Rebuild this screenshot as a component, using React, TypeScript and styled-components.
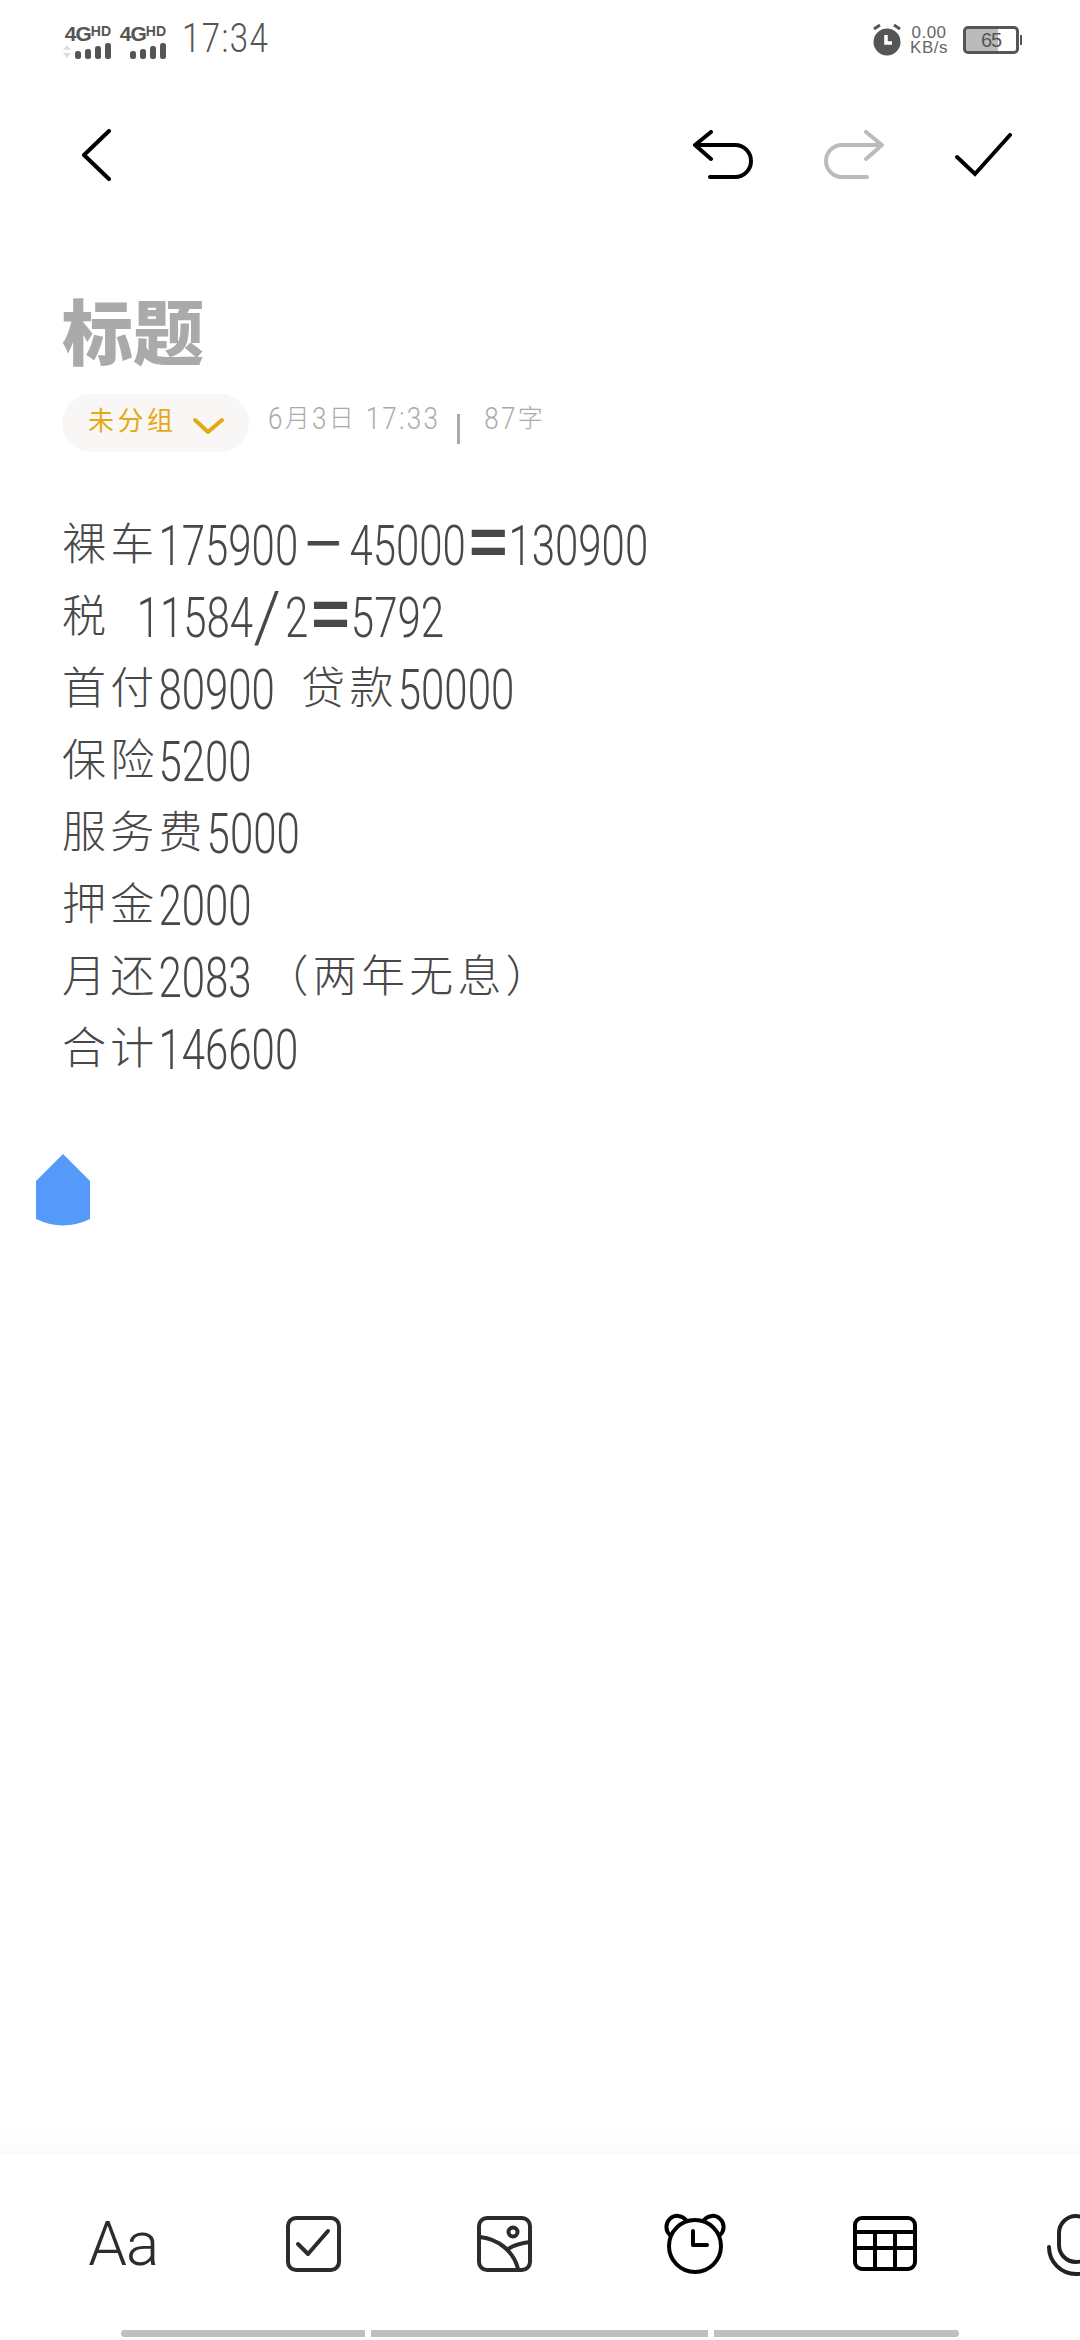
import React from 'react';
import styled, { createGlobalStyle } from 'styled-components';

const GlobalStyle = createGlobalStyle`
  html, body { margin: 0; padding: 0; background: #fff; }
  body { font-family: "Liberation Sans", "Noto Sans CJK SC", sans-serif; }
`;

const Screen = styled.div`
  position: relative;
  width: 1080px;
  height: 2340px;
  overflow: hidden;
  display: flex;
  flex-direction: column;
  background: #fff;
`;

// the note font is tall, narrow and thin, so digits get stretched
const Tall = styled.span<{ $y?: number }>`
  display: inline-block;
  font-family: Roboto, "Liberation Sans", sans-serif;
  font-weight: 300;
  transform: scaleY(${p => p.$y ?? 1.34});
`;

const StatusBar = styled.div`
  height: 80px;
  padding: 0 58px 0 63px;
  box-sizing: border-box;
  display: flex;
  align-items: center;
  color: #555;
`;

const Signal = styled.div`
  width: 48px;
  margin-right: 7px;
  display: flex;
  flex-direction: column;
  align-items: flex-end;
`;

const NetLabel = styled.div`
  font-size: 21px;
  line-height: 19px;
  font-weight: 700;
  white-space: nowrap;
  letter-spacing: -1px;
  small { font-size: 14px; vertical-align: 5px; letter-spacing: 0; }
`;

const Time = styled.div`
  font-size: 33px;
  line-height: 40px;
  letter-spacing: 1.4px;
  margin: -5px 0 0 9px;
  flex: 1;
`;

const Speed = styled.div`
  width: 40px;
  margin: 0 14px 0 7px;
  font-size: 17px;
  line-height: 15px;
  text-align: center;
  letter-spacing: 0.5px;
  color: #666;
`;

const BatteryBody = styled.div<{ $level: number }>`
  width: 56px;
  height: 28px;
  box-sizing: border-box;
  border: 3px solid #555;
  border-radius: 5px;
  background: linear-gradient(
    to right,
    #bbb ${p => p.$level}%,
    #fff ${p => p.$level}%
  );
  background-clip: content-box;
  font-size: 20px;
  line-height: 22px;
  text-align: center;
  letter-spacing: -1px;
`;

const BatteryTip = styled.div`
  width: 2px;
  height: 10px;
  margin-left: 1px;
  background: #555;
`;

const TopBar = styled.div`
  height: 150px;
  padding: 0 68px 0 81px;
  box-sizing: border-box;
  display: flex;
  align-items: center;
`;

const TopActions = styled.div`
  margin-left: auto;
  display: flex;
  align-items: center;
  gap: 71px;
`;

const Content = styled.div`
  flex: 1;
  padding-left: 62px;
`;

const Title = styled.h1`
  margin: 52px 0 0;
  height: 100px;
  font-family: "Noto Sans CJK SC", sans-serif;
  font-size: 71px;
  line-height: 93px;
  font-weight: 900;
  color: #aaa;
`;

const MetaRow = styled.div`
  margin-top: 12px;
  height: 58px;
  display: flex;
  align-items: center;
  color: #aaa;
`;

const GroupPill = styled.div`
  width: 187px;
  height: 58px;
  box-sizing: border-box;
  padding: 0 24px 0 26px;
  border-radius: 29px;
  background: #f8f7f6;
  display: flex;
  align-items: center;
  justify-content: space-between;
  font-family: "Noto Sans CJK SC", sans-serif;
  font-size: 26px;
  letter-spacing: 3.5px;
  color: #e6a817;
`;

const PillLabel = styled.span`
  margin-top: -10px;
`;

const PillChevron = styled.svg`
  margin-top: 6px;
`;

const MetaText = styled.div<{ $gap?: number }>`
  margin-left: ${p => p.$gap ?? 0}px;
  margin-top: -15px;
  font-size: 26px;
  white-space: pre;
  letter-spacing: 2.3px;
`;

const MetaCjk = styled.span`
  font-family: "Noto Sans CJK SC", sans-serif;
  font-size: 25px;
  font-weight: 300;
`;

const Divider = styled.div`
  width: 3px;
  height: 30px;
  background: #aaa;
  margin: 12px 24px 0 17px;
`;

const Body = styled.div`
  margin-top: 58px;
`;

const Line = styled.div`
  height: 72px;
  line-height: 72px;
  color: #484848;
  font-size: 42px;
  white-space: pre;
  word-spacing: 3px;
`;

const Cjk = styled.span`
  font-family: "Noto Sans CJK SC", sans-serif;
  font-size: 44px;
  font-weight: 300;
  letter-spacing: 4.2px;
  line-height: 0;
`;

const Dash = styled(Cjk)`
  font-weight: 700;
  margin-left: 3px;
`;

const Sign = styled.span`
  font-size: 66px;
  font-weight: 700;
  letter-spacing: 1px;
  margin-left: 3px;
  line-height: 0;
  vertical-align: -5px;
`;

const Slash = styled.span`
  font-family: Roboto, "Liberation Sans", sans-serif;
  font-size: 70px;
  font-weight: 300;
  letter-spacing: 4px;
  line-height: 0;
  vertical-align: -9px;
`;

const Handle = styled.svg`
  position: absolute;
  left: 36px;
  top: 1154px;
`;

const Shade = styled.div`
  height: 24px;
  background: linear-gradient(to bottom, #fff, #fafafa);
`;

const ToolBar = styled.div`
  height: 176px;
  padding: 3px 0 0 28px;
  box-sizing: border-box;
  display: flex;
  align-items: center;
  overflow: hidden;
`;

const ToolSlot = styled.div`
  flex: 0 0 190.5px;
  display: flex;
  justify-content: center;
  align-items: center;
`;

const FontTool = styled.div`
  font-family: Roboto, "Liberation Sans", sans-serif;
  font-size: 62px;
  line-height: 70px;
  font-weight: 300;
  color: #2c2c2c;
  letter-spacing: -1px;
`;

const ScrollRow = styled.div`
  height: 10px;
  padding-left: 121px;
  display: flex;
  gap: 6px;
`;

const ScrollSegment = styled.div<{ $width: number; $edge?: 'left' | 'right' }>`
  width: ${p => p.$width}px;
  height: 7px;
  background: #bfbfbf;
  border-radius: ${p =>
    p.$edge === 'left' ? '4px 0 0 4px' : p.$edge === 'right' ? '0 4px 4px 0' : '0'};
`;

const ToolIcon = styled.svg`
  display: block;
  overflow: visible;
  fill: none;
  stroke-linecap: round;
  stroke-linejoin: round;
`;

const lines = [
  '裸车175900－45000=130900',
  '税  11584/2=5792',
  '首付80900  贷款50000',
  '保险5200',
  '服务费5000',
  '押金2000',
  '月还2083\u2009（两年无息）',
  '合计146600',
];

// split a note line into runs, the digits and the CJK have different sizes
const renderRuns = (text: string) =>
  text.split(/(－|[^\x00-\x7f]+|=|\/)/).filter(Boolean).map((run, i) => {
    if (run === '=') return <Sign key={i}>{run}</Sign>;
    if (run === '/') return <Slash key={i}>{run}</Slash>;
    if (run === '－') return <Dash key={i}>{run}</Dash>;
    if (/[^\x00-\x7f]/.test(run)) return <Cjk key={i}>{run}</Cjk>;
    if (!run.trim()) return <span key={i}>{run}</span>;
    return <Tall key={i}>{run}</Tall>;
  });

const SignalBars = ({ arrows }: { arrows?: boolean }) => (
  <svg width="48" height="16" viewBox="0 0 48 16">
    {arrows && <path d="M0 7 L4 2 L8 7 Z M0 10 L8 10 L4 15 Z" fill="#ddd" />}
    <rect x="12" y="8" width="6" height="8" rx="2.5" fill="#555" />
    <rect x="22" y="6" width="6" height="10" rx="2.5" fill="#555" />
    <rect x="32" y="3" width="6" height="13" rx="2.5" fill="#555" />
    <rect x="42" y="0" width="6" height="16" rx="2.5" fill="#555" />
  </svg>
);

const AlarmDot = () => (
  <svg width="30" height="32" viewBox="0 0 30 32">
    <circle cx="15" cy="18" r="13.5" fill="#555" />
    <path d="M2 5 L8 1 M28 5 L22 1" stroke="#555" strokeWidth="3" />
    <path d="M14 11 V19 H20" stroke="#fff" strokeWidth="3.5" fill="none" />
  </svg>
);

const UndoArrow = ({ color, flip }: { color: string; flip?: boolean }) => (
  <svg
    width="60"
    height="50"
    viewBox="0 0 60 50"
    fill="none"
    stroke={color}
    strokeWidth="4"
    strokeLinecap="round"
    strokeLinejoin="round"
    transform={flip ? 'scale(-1 1)' : undefined}
  >
    <path d="M18 2 L2 15 L18 29 M2 15 H42 A16 16 0 0 1 42 47 H17" />
  </svg>
);

export default function App() {
  return (
    <Screen>
      <GlobalStyle />
      <StatusBar>
        <Signal>
          <NetLabel>4G<small>HD</small></NetLabel>
          <SignalBars arrows />
        </Signal>
        <Signal>
          <NetLabel>4G<small>HD</small></NetLabel>
          <SignalBars />
        </Signal>
        <Time><Tall $y={1.25}>17:34</Tall></Time>
        <AlarmDot />
        <Speed>0.00<br />KB/s</Speed>
        <BatteryBody $level={65}>65</BatteryBody>
        <BatteryTip />
      </StatusBar>

      <TopBar>
        <svg width="31" height="52" viewBox="0 0 31 52" fill="none" stroke="#000" strokeWidth="4" strokeLinecap="round" strokeLinejoin="round">
          <path d="M28 2 L3 26 L28 50" />
        </svg>
        <TopActions>
          <UndoArrow color="#000" />
          <UndoArrow color="#bbb" flip />
          <svg width="57" height="44" viewBox="0 0 57 44" fill="none" stroke="#000" strokeWidth="4" strokeLinecap="round" strokeLinejoin="miter">
            <path d="M2 24 L20 41 L55 2" />
          </svg>
        </TopActions>
      </TopBar>

      <Content>
        <Title>标题</Title>
        <MetaRow>
          <GroupPill>
            <PillLabel>未分组</PillLabel>
            <PillChevron width="33" height="18" viewBox="0 0 33 18" fill="none" stroke="#e6a817" strokeWidth="4" strokeLinecap="round" strokeLinejoin="round">
              <path d="M3 3 L16 15 L30 3" />
            </PillChevron>
          </GroupPill>
          <MetaText $gap={19}>
            <Tall $y={1.2}>6</Tall><MetaCjk>月</MetaCjk><Tall $y={1.2}>3</Tall><MetaCjk>日</MetaCjk> <Tall $y={1.2}>17:33</Tall>
          </MetaText>
          <Divider />
          <MetaText><Tall $y={1.2}>87</Tall><MetaCjk>字</MetaCjk></MetaText>
        </MetaRow>
        <Body>
          {lines.map(line => (
            <Line key={line}>{renderRuns(line)}</Line>
          ))}
        </Body>
      </Content>

      <Handle width="54" height="72" viewBox="0 0 54 72">
        <path d="M27 0 L54 27 V65 Q27 78 0 65 V27 Z" fill="#5599fb" />
      </Handle>

      <Shade />
      <ToolBar>
        <ToolSlot>
          <FontTool>Aa</FontTool>
        </ToolSlot>
        <ToolSlot>
          <ToolIcon width="55" height="56" viewBox="0 0 55 56" stroke="#2c2c2c" strokeWidth="4">
            <rect x="2" y="2" width="51" height="52" rx="8" />
            <path d="M12 28 L22 38 L42 15" />
          </ToolIcon>
        </ToolSlot>
        <ToolSlot>
          <ToolIcon width="55" height="56" viewBox="0 0 55 56" stroke="#2c2c2c" strokeWidth="4">
            <rect x="2" y="2" width="51" height="52" rx="8" />
            <circle cx="36" cy="16" r="4.5" />
            <path d="M3 21 C22 23 37 36 41 53 M31 33 C37 29 44 27 53 26" />
          </ToolIcon>
        </ToolSlot>
        <ToolSlot>
          <ToolIcon width="60" height="60" viewBox="0 0 60 60" stroke="#000" strokeWidth="4">
            <circle cx="30" cy="32" r="26" />
            <path d="M5 21 A11 11 0 1 1 21 6 M55 21 A11 11 0 1 0 39 6" />
            <path d="M28 17 V31 H42" />
          </ToolIcon>
        </ToolSlot>
        <ToolSlot>
          <ToolIcon width="64" height="55" viewBox="0 0 64 55" stroke="#000" strokeWidth="4">
            <rect x="2" y="2" width="60" height="51" rx="7" />
            <path d="M2 16 H62 M2 32 H62 M22 16 V53 M42 16 V53" />
          </ToolIcon>
        </ToolSlot>
        <ToolSlot>
          <ToolIcon width="58" height="60" viewBox="0 0 58 60" stroke="#222" strokeWidth="4">
            <rect x="12" y="2" width="34" height="46" rx="17" />
            <path d="M2 33 A27 27 0 0 0 56 33" />
          </ToolIcon>
        </ToolSlot>
      </ToolBar>
      <ScrollRow>
        <ScrollSegment $width={244} $edge="left" />
        <ScrollSegment $width={337} />
        <ScrollSegment $width={245} $edge="right" />
      </ScrollRow>
    </Screen>
  );
}
